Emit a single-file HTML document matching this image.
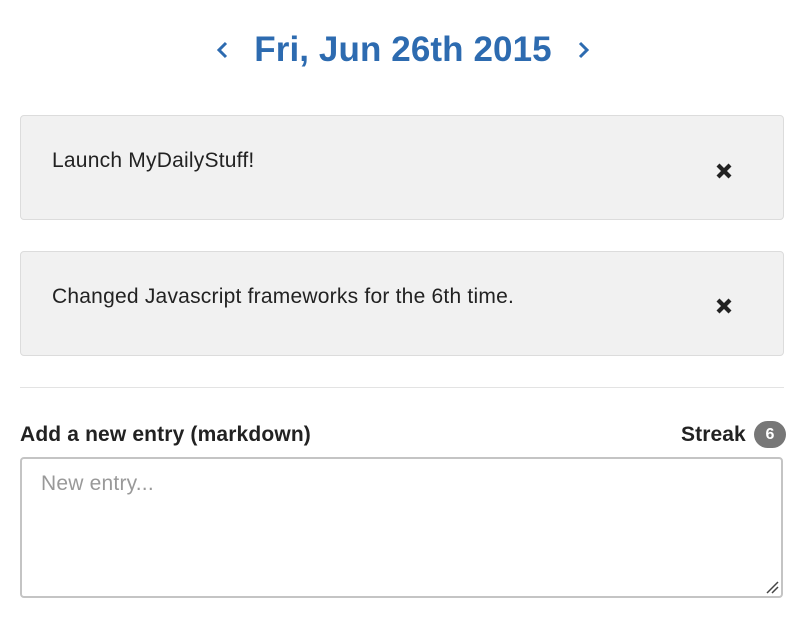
<!DOCTYPE html>
<html><head><style>
body{margin:0;width:804px;height:617px;background:#fff;font-family:"Liberation Sans",Arial,sans-serif;color:#333;position:relative}
.t{position:absolute;top:28px;left:0;width:804px;text-align:center;color:#2d6bb0;font-weight:bold;font-size:35px;line-height:44px;letter-spacing:0.1px}
.card{position:absolute;left:20px;width:762px;height:103px;background:#f1f1f1;border:1px solid #dcdcdc;border-radius:4px}
.card span{position:absolute;left:31px;top:33px;font-size:21px;color:#222;letter-spacing:0.22px}
.x{position:absolute;left:694px;width:18px;height:18px}
hr{position:absolute;top:387px;left:20px;width:764px;margin:0;border:0;border-top:1px solid #e3e3e3}
.lab{position:absolute;top:423px;left:20px;font-weight:bold;font-size:21px;color:#222;letter-spacing:0.15px}
.st{position:absolute;top:423px;left:681px;font-weight:bold;font-size:21px;color:#222;letter-spacing:0.1px}
.b{position:absolute;left:754px;top:421px;height:27px;width:32px;background:#777;color:#fff;border-radius:14px;font-size:16px;font-weight:bold;text-align:center;line-height:27px}
.ta{position:absolute;left:20px;top:457px;border:2px solid #c4c4c4;border-radius:4px;box-sizing:content-box;width:759px;height:137px}
.ta span{position:absolute;left:19px;top:13px;font-size:21px;color:#999;letter-spacing:0.2px}
</style></head><body>
<svg style="position:absolute;left:214px;top:40px" width="16" height="20"><path d="M12 3L5 10L12 17" stroke="#2d6bb0" stroke-width="3" fill="none"/></svg>
<div class="t" style="left:1px">Fri, Jun 26th 2015</div>
<svg style="position:absolute;left:576px;top:40px" width="16" height="20"><path d="M4 3L11 10L4 17" stroke="#2d6bb0" stroke-width="3" fill="none"/></svg>
<div class="card" style="top:115px"><span>Launch MyDailyStuff!</span>
<svg class="x" style="top:46px" viewBox="0 0 18 18"><path d="M3 3L15 15M15 3L3 15" stroke="#222" stroke-width="4.2"/></svg></div>
<div class="card" style="top:251px"><span>Changed Javascript frameworks for the 6th time.</span>
<svg class="x" style="top:45px" viewBox="0 0 18 18"><path d="M3 3L15 15M15 3L3 15" stroke="#222" stroke-width="4.2"/></svg></div>
<hr>
<div class="lab">Add a new entry (markdown)</div>
<div class="st">Streak</div>
<div class="b">6</div>
<div class="ta"><span>New entry...</span>
<svg style="position:absolute;right:2px;bottom:2px" width="14" height="14"><path d="M2 13L13 2M7 13L13 7" stroke="#444" stroke-width="1.5"/></svg></div>
</body></html>
